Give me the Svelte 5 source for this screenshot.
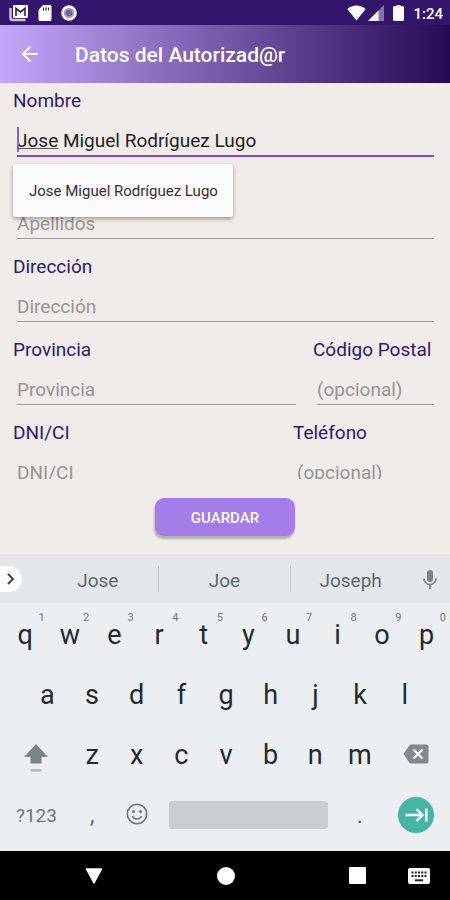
<script>
  let nombre = $state('Jose Miguel Rodríguez Lugo')

  const suggestions = ['Jose', 'Joe', 'Joseph']
  const topRow = 'qwertyuiop'.split('')
  const middleRow = 'asdfghjkl'.split('')
  const bottomRow = 'zxcvbnm'.split('')
</script>

<div class="screen">
  <header>
    <div class="status">
      <div class="status-icons">
        <svg width="20" height="18" viewBox="0 0 20 18">
          <path d="M1.500 4v10q0 2 2 2h13" fill="none" stroke="#c9c2d6" stroke-width="2.600" />
          <rect x="4" y="1" width="15" height="13" rx="1" fill="#fff" />
          <path d="M7 12V4.500l4.500 3.500L16 4.500V12" fill="none" stroke="#33156b" stroke-width="1.600" />
        </svg>
        <svg width="14" height="16" viewBox="0 0 14 16">
          <path d="M5 0h7q1.500 0 1.500 1.500v13Q13.500 16 12 16H2Q.5 16 .5 14.500V5z" fill="#fff" />
          <path d="M5.500 2.500v3M8 2.500v3M10.500 2.500v3" stroke="#33156b" stroke-width="1.200" />
        </svg>
        <svg width="16" height="16" viewBox="0 0 16 16">
          <circle cx="8" cy="8" r="6.500" fill="#a99bc4" stroke="#fff" stroke-width="2.600" />
          <circle cx="8" cy="8" r="3.300" fill="#75629c" />
        </svg>
      </div>
      <div class="status-icons right">
        <svg width="19" height="16" viewBox="0 0 19 16">
          <path d="M9.500 15.500.3 4Q4.500.5 9.500.5T18.700 4z" fill="#fff" />
        </svg>
        <svg width="16" height="16" viewBox="0 0 16 16">
          <path d="M16 0v16H0z" fill="#8571ab" />
          <path d="M10.500 5.500V16H0z" fill="#fff" />
        </svg>
        <svg class="battery" width="11" height="16" viewBox="0 0 11 16">
          <path d="M3.500 0h4v1H9.500Q11 1 11 2.500v12Q11 16 9.500 16h-8Q0 16 0 14.500v-12Q0 1 1.500 1h2z" fill="#fff" />
        </svg>
        <span class="clock">1:24</span>
      </div>
    </div>
    <div class="appbar">
      <button class="back" aria-label="Atrás">
        <svg width="18" height="18" viewBox="0 0 18 18">
          <path d="M17 9H2M9.500 1.500 2 9l7.500 7.500" fill="none" stroke="#fff" stroke-width="2" />
        </svg>
      </button>
      <h1>Datos del Autorizad@r</h1>
    </div>
  </header>

  <form onsubmit={(e) => e.preventDefault()}>
    <div class="fields">
      <div class="field">
        <label for="nombre">Nombre</label>
        <div class="box active">
          <input id="nombre" type="text" autocomplete="off" bind:value={nombre} />
          <button type="button" class="suggest">Jose Miguel Rodríguez Lugo</button>
        </div>
      </div>
      <div class="field unlabelled">
        <div class="box"><input type="text" placeholder="Apellidos" aria-label="Apellidos" /></div>
      </div>
      <div class="field">
        <label for="direccion">Dirección</label>
        <div class="box"><input id="direccion" type="text" placeholder="Dirección" /></div>
      </div>
      <div class="pair place">
        <div class="field">
          <label for="provincia">Provincia</label>
          <div class="box"><input id="provincia" type="text" placeholder="Provincia" /></div>
        </div>
        <div class="field">
          <label for="postal">Código Postal</label>
          <div class="box"><input id="postal" type="text" placeholder="(opcional)" /></div>
        </div>
      </div>
      <div class="pair contact">
        <div class="field">
          <label for="dni">DNI/CI</label>
          <div class="box"><input id="dni" type="text" placeholder="DNI/CI" /></div>
        </div>
        <div class="field">
          <label for="telefono">Teléfono</label>
          <div class="box"><input id="telefono" type="tel" placeholder="(opcional)" /></div>
        </div>
      </div>
    </div>
    <div class="actions">
      <button class="save">GUARDAR</button>
    </div>
  </form>

  <section class="keyboard">
    <div class="strip">
      <button class="expand" aria-label="Más">
        <svg width="8" height="12" viewBox="0 0 8 12">
          <path d="M1 1l5 5-5 5" fill="none" stroke="#37474f" stroke-width="2" />
        </svg>
      </button>
      {#each suggestions as word}
        <button class="word">{word}</button>
      {/each}
      <button class="mic" aria-label="Voz">
        <svg width="14" height="19" viewBox="0 0 14 19">
          <rect x="4" y="0" width="6" height="12" rx="3" fill="#78858b" />
          <path d="M1 8.500a6 6 0 0 0 12 0M7 14.500V19" fill="none" stroke="#78858b" stroke-width="1.700" />
        </svg>
      </button>
    </div>

    <div class="keys">
      <div class="row">
        {#each topRow as key, i}
          <button class="key">{key}<span class="digit">{(i + 1) % 10}</span></button>
        {/each}
      </div>
      <div class="row middle">
        {#each middleRow as key}
          <button class="key">{key}</button>
        {/each}
      </div>
      <div class="row">
        <button class="key wide" aria-label="Mayúsculas">
          <svg width="24" height="34" viewBox="0 0 24 34">
            <path d="M12 6l12 13h-6.500v6.500h-11V19H0z" fill="#7b868a" />
            <path d="M6.500 32.300h11" stroke="#b0b8bb" stroke-width="2.400" />
          </svg>
        </button>
        {#each bottomRow as key}
          <button class="key">{key}</button>
        {/each}
        <button class="key wide" aria-label="Borrar">
          <svg width="26" height="22" viewBox="0 0 26 22">
            <path d="M8 .5h15.500Q25.500.5 25.500 2.500v15q0 2-2 2H8q-1 0-1.700-1L.5 10l5.800-8.500Q7 .5 8 .5z" fill="#7f8a8e" />
            <path d="M10.500 5.500l9 9M19.500 5.500l-9 9" stroke="#fff" stroke-width="2.200" />
          </svg>
        </button>
      </div>
      <div class="row">
        <button class="key wide symbols">?123</button>
        <button class="key soft">,</button>
        <button class="key" aria-label="Emojis">
          <svg width="22" height="24" viewBox="0 0 22 24">
            <circle cx="11" cy="11" r="9.700" fill="none" stroke="#6b777c" stroke-width="1.600" />
            <circle cx="7.500" cy="8.500" r="1.500" fill="#6b777c" />
            <circle cx="14.500" cy="8.500" r="1.500" fill="#6b777c" />
            <path d="M6.300 13a5.200 5.200 0 0 0 9.400 0" fill="none" stroke="#6b777c" stroke-width="1.600" />
          </svg>
        </button>
        <button class="key space" aria-label="Espacio"><span></span></button>
        <button class="key soft">.</button>
        <button class="key wide" aria-label="Siguiente">
          <svg width="36" height="36" viewBox="0 0 36 36">
            <circle cx="18" cy="18" r="18" fill="#46b3a5" />
            <path d="M7 18h17M18.500 12l6 6-6 6M28.300 11.500v13" fill="none" stroke="#fff" stroke-width="2.400" />
          </svg>
        </button>
      </div>
    </div>
  </section>

  <nav>
    <button class="nav-back" aria-label="Ocultar teclado">
      <svg width="18" height="16" viewBox="0 0 18 16"><path d="M1.500 1h15L9 15z" fill="#fff" stroke="#fff" stroke-width="1.500" stroke-linejoin="round" /></svg>
    </button>
    <button aria-label="Inicio">
      <svg width="18" height="18" viewBox="0 0 18 18"><circle cx="9" cy="9" r="9" fill="#fff" /></svg>
    </button>
    <button class="nav-recent" aria-label="Recientes">
      <svg width="17" height="17" viewBox="0 0 17 17"><rect width="17" height="17" rx="1" fill="#fff" /></svg>
    </button>
    <button aria-label="Cambiar teclado">
      <svg width="22" height="16" viewBox="0 0 22 16">
        <rect width="22" height="16" rx="2" fill="#fff" />
        <path d="M3.500 4.500h15M3.500 8h15" stroke="#222" stroke-width="2" stroke-dasharray="2 1.250" />
        <path d="M7 12.300h8" stroke="#222" stroke-width="2" />
      </svg>
    </button>
  </nav>
</div>

<style>
  :global(body) {
    margin: 0;
  }

  .screen {
    display: flex;
    flex-direction: column;
    height: 100vh;
    overflow: hidden;
    background: #efecea;
    font-family: Roboto, sans-serif;
  }

  svg {
    display: block;
    flex: none;
  }

  button {
    display: flex;
    align-items: center;
    justify-content: center;
    margin: 0;
    padding: 0;
    border: 0;
    background: none;
    color: inherit;
    font: inherit;
  }

  .status {
    display: flex;
    align-items: center;
    justify-content: space-between;
    height: 25px;
    padding: 0 7px 0 9px;
    background: #33156b;
    color: #fff;
  }

  .status-icons {
    display: flex;
    align-items: center;
    gap: 9px;
  }

  .status-icons.right {
    gap: 2px;
  }

  .battery {
    margin: 0 7px;
  }

  .clock {
    padding-top: 2px;
    font-size: 15px;
    font-weight: 500;
    line-height: 24px;
  }

  .appbar {
    display: flex;
    align-items: center;
    height: 58px;
    background: linear-gradient(to right, #c4a6fb, #250a55);
    color: #fff;
  }

  .back {
    width: 60px;
    height: 58px;
  }

  h1 {
    margin: 0 0 0 15px;
    padding-top: 2px;
    font-size: 21px;
    font-weight: 500;
    line-height: 28px;
  }

  form {
    display: flex;
    flex: 1;
    flex-direction: column;
    min-height: 0;
  }

  .fields {
    flex: 1;
    min-height: 0;
    padding: 0 12px 0 13px;
    overflow: hidden;
  }

  .pair {
    display: grid;
    gap: 13px;
  }

  .place {
    grid-template-columns: 287fr 125fr;
  }

  .contact {
    grid-template-columns: 267fr 145fr;
  }

  .field {
    min-width: 0;
  }

  .unlabelled {
    padding-top: 36px;
  }

  label {
    display: block;
    height: 36px;
    color: #2d1a6b;
    font-size: 19px;
    line-height: 36px;
  }

  .box {
    position: relative;
    height: 47px;
    padding: 0 4px;
  }

  input {
    display: block;
    box-sizing: border-box;
    width: 100%;
    height: 37px;
    padding: 6px 0 0;
    border: 0;
    border-bottom: 1px solid #a09d9c;
    border-radius: 0;
    outline: 0;
    background: none;
    color: #212121;
    font: 19px/30px Roboto, sans-serif;
  }

  input::placeholder {
    color: #979493;
    opacity: 1;
  }

  .active input {
    height: 38px;
    border-bottom: 2px solid #7e4fc0;
  }

  /* text cursor */
  .active::before {
    content: '';
    position: absolute;
    top: 8px;
    left: 4px;
    width: 2px;
    height: 25px;
    background: #8a63c9;
  }

  /* word being composed */
  .active::after {
    content: '';
    position: absolute;
    top: 29px;
    left: 5px;
    width: 40px;
    height: 1px;
    background: #555;
  }

  .suggest {
    position: absolute;
    top: 45px;
    left: 0;
    z-index: 2;
    height: 53px;
    padding: 0 15px 0 16px;
    border-radius: 2px;
    background: #fafafa;
    box-shadow: 0 2px 4px rgba(0, 0, 0, 0.35);
    color: #303030;
    font-size: 15px;
    white-space: nowrap;
  }

  .actions {
    display: flex;
    justify-content: center;
    padding: 19px 0 18px;
  }

  .save {
    width: 140px;
    height: 38px;
    padding-top: 2px;
    border-radius: 9px;
    background: #a47de8;
    box-shadow: -1px 3px 2px rgba(0, 0, 0, 0.25);
    color: #fff;
    font-size: 15px;
    font-weight: 500;
  }

  .keyboard {
    background: #eceff1;
    color: #1f2a30;
  }

  .strip {
    display: grid;
    grid-template-columns: 38px 120fr 133fr 120fr 40px;
    align-items: center;
    height: 48px;
    padding-top: 1px;
    background: #e4e7e9;
  }

  .expand {
    width: 22px;
    height: 26px;
    border-radius: 0 13px 13px 0;
    background: #fff;
  }

  .word {
    height: 26px;
    padding-top: 2px;
    color: #5c686d;
    font-size: 19px;
  }

  .word + .word {
    border-left: 1px solid #c5cacc;
  }

  .mic {
    height: 26px;
  }

  .keys {
    padding: 2px 1px 6px 3px;
  }

  .row {
    display: flex;
    height: 60px;
  }

  .middle {
    padding: 0 22px;
  }

  .key {
    position: relative;
    flex: 2 1 0;
    min-width: 0;
    font-size: 27px;
  }

  .wide {
    flex-grow: 3;
  }

  .digit {
    position: absolute;
    top: 6px;
    right: 3px;
    color: #6b777c;
    font-size: 11px;
    line-height: 14px;
  }

  .symbols {
    color: #6b777c;
    font-size: 19px;
  }

  .soft {
    color: #5c686d;
    font-size: 23px;
  }

  .space {
    flex-grow: 8;
  }

  .space span {
    width: 89%;
    height: 28px;
    border-radius: 3px;
    background: #c9ced1;
  }

  nav {
    display: grid;
    grid-template-columns: 28fr 132fr 131fr 35fr 62fr 62fr;
    height: 49px;
    background: #000;
  }

  .nav-back {
    grid-column: 2;
  }

  .nav-recent {
    grid-column: 5;
  }
</style>
